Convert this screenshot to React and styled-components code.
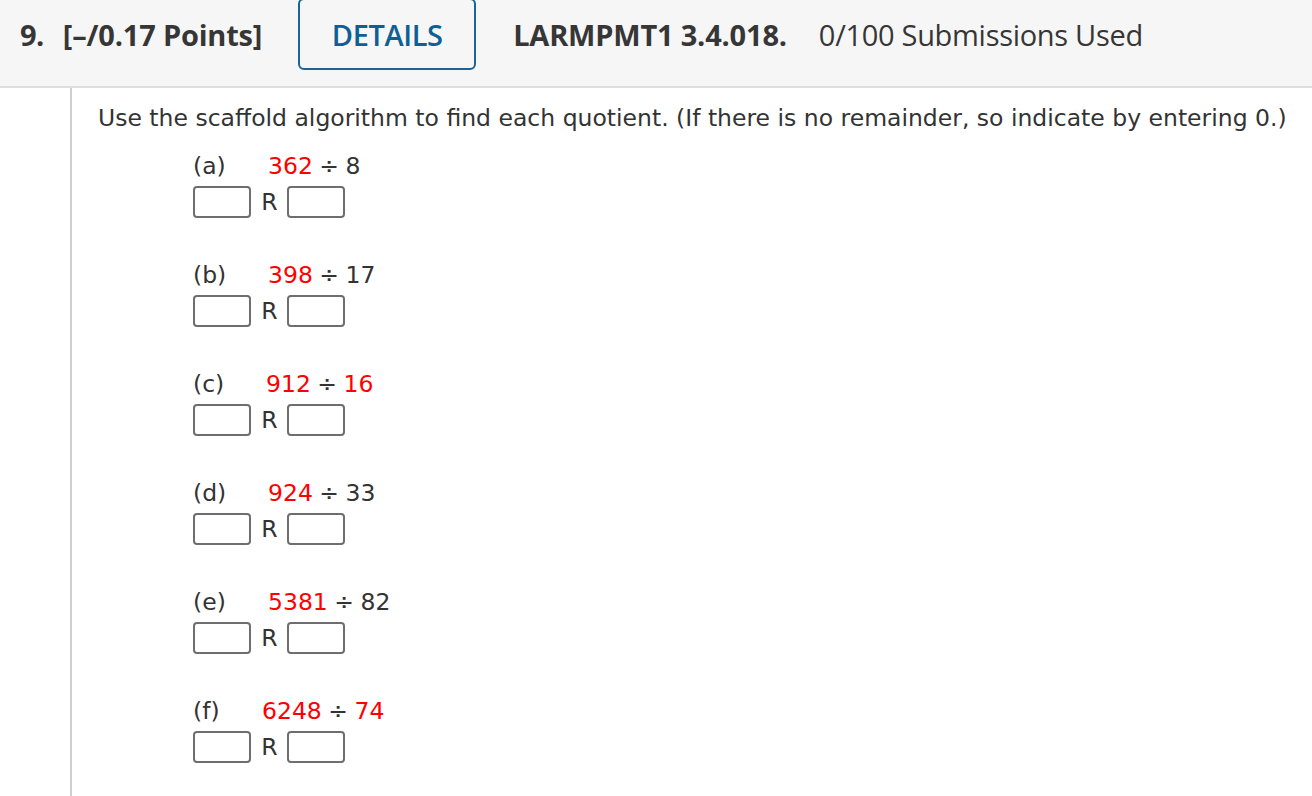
import React from 'react';
import styled, { createGlobalStyle } from 'styled-components';

const GlobalStyle = createGlobalStyle`
  html, body {
    margin: 0;
    padding: 0;
    background: #fff;
  }
  body {
    width: 1312px;
    height: 796px;
    overflow: hidden;
  }
`;

const Page = styled.div`
  width: 1312px;
  height: 796px;
  display: flex;
  flex-direction: column;
`;

const Header = styled.header`
  height: 86px;
  background: #f6f6f6;
  border-bottom: 2px solid #dedede;
  display: flex;
  align-items: flex-start;
  padding-left: 20px;
  font-family: "Open Sans", "Liberation Sans", sans-serif;
  color: #363636;
  font-size: 29px;
  flex-shrink: 0;
`;

const HeaderRow = styled.div`
  display: flex;
  align-items: center;
  height: 72px;
  margin-top: -2px;
`;

const Num = styled.span`
  font-weight: 700;
  margin-right: 19px;
  letter-spacing: -0.5px;
`;

const Points = styled.span`
  font-weight: 700;
  letter-spacing: -0.2px;
`;

const DetailsButton = styled.button`
  box-sizing: border-box;
  height: 72px;
  width: 178px;
  margin-left: 36px;
  border: 2px solid #1a6496;
  border-radius: 6px;
  background: transparent;
  color: #0f5f94;
  font-family: inherit;
  font-size: 29px;
  font-weight: 600;
  letter-spacing: -0.4px;
  cursor: pointer;
`;

const Code = styled.span`
  font-weight: 700;
  margin-left: 37px;
  letter-spacing: -0.2px;
`;

const Used = styled.span`
  font-weight: 400;
  margin-left: 32px;
  letter-spacing: -0.3px;
`;

const Body = styled.div`
  flex: 1;
  display: flex;
  padding-left: 70px;
`;

const Question = styled.div`
  flex: 1;
  border-left: 2px solid #cfcfcf;
  padding: 15px 0 0 26px;
  font-family: "DejaVu Sans", "Bitstream Vera Sans", Verdana, sans-serif;
  color: #333;
  font-size: 23.5px;
`;

const Prompt = styled.p`
  margin: 0;
  line-height: 30px;
  white-space: nowrap;
`;

const Parts = styled.div`
  display: flex;
  flex-direction: column;
  gap: 43px;
  margin-top: 19px;
  padding-left: 95px;
`;

const Part = styled.div`
  display: flex;
  flex-direction: column;
  gap: 6px;
`;

const PartHead = styled.div`
  display: flex;
  align-items: center;
  height: 28px;
  line-height: 28px;
`;

const Label = styled.span`
  width: ${({ $w }) => $w}px;
`;

const Expr = styled.span`
  word-spacing: -1px;
`;

const Red = styled.span`
  color: #f00;
`;

const Answers = styled.div`
  display: flex;
  align-items: center;
`;

const Box = styled.input`
  box-sizing: border-box;
  width: 58px;
  height: 32px;
  border: 2px solid #6e6e6e;
  border-radius: 4px;
  background: #fff;
  margin: 0;
  padding: 0;
`;

const R = styled.span`
  width: 35px;
  text-align: center;
  padding-left: 1px;
`;

const parts = [
  { label: '(a)', w: 75, dividend: '362', rest: ' ÷ 8', red: false },
  { label: '(b)', w: 75, dividend: '398', rest: ' ÷ 17', red: false },
  { label: '(c)', w: 73, dividend: '912', rest: '16', red: true },
  { label: '(d)', w: 75, dividend: '924', rest: ' ÷ 33', red: false },
  { label: '(e)', w: 75, dividend: '5381', rest: ' ÷ 82', red: false },
  { label: '(f)', w: 69, dividend: '6248', rest: '74', red: true },
];

const App = () => (
  <>
    <GlobalStyle />
    <Page>
      <Header>
        <HeaderRow>
          <Num>9.</Num>
          <Points>[–/0.17 Points]</Points>
          <DetailsButton>DETAILS</DetailsButton>
          <Code>LARMPMT1 3.4.018.</Code>
          <Used>0/100 Submissions Used</Used>
        </HeaderRow>
      </Header>
      <Body>
        <Question>
          <Prompt>
            Use the scaffold algorithm to find each quotient. (If there is no remainder, so indicate by entering 0.)
          </Prompt>
          <Parts>
            {parts.map((p) => (
              <Part key={p.label}>
                <PartHead>
                  <Label $w={p.w}>{p.label}</Label>
                  <Expr>
                    <Red>{p.dividend}</Red>
                    {p.red ? (
                      <>
                        {' ÷ '}
                        <Red>{p.rest}</Red>
                      </>
                    ) : (
                      p.rest
                    )}
                  </Expr>
                </PartHead>
                <Answers>
                  <Box type="text" />
                  <R>R</R>
                  <Box type="text" />
                </Answers>
              </Part>
            ))}
          </Parts>
        </Question>
      </Body>
    </Page>
  </>
);

export default App;
